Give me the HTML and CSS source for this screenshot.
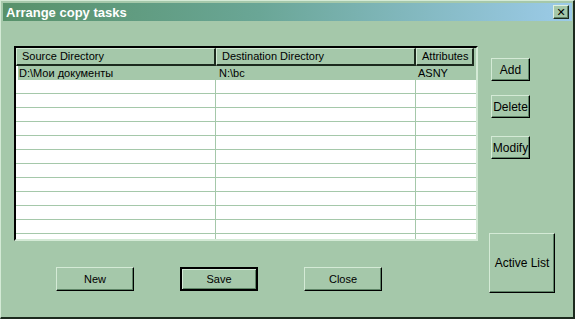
FILE: index.html
```html
<!DOCTYPE html>
<html>
<head>
  <title>Arrange copy tasks</title>
  <link rel="stylesheet" href="styles.css">
</head>
<body>

  <div class="window">
    <div class="titlebar">
      <span class="title">Arrange copy tasks</span>
      <button class="close-box">&#x2715;</button>
    </div>

    <div class="content">
      <div class="left-col">
        <div class="list">
          <div class="list-head">
            <div class="hcell col-src">Source Directory</div>
            <div class="hcell col-dst">Destination Directory</div>
            <div class="hcell col-attr">Attributes</div>
          </div>
          <div class="list-rows">
            <div class="row selected">
              <div class="cell col-src">D:\Мои документы</div>
              <div class="cell col-dst">N:\bc</div>
              <div class="cell col-attr">ASNY</div>
            </div>
            <div class="row"><div class="cell col-src"></div><div class="cell col-dst"></div><div class="cell col-attr"></div></div>
            <div class="row"><div class="cell col-src"></div><div class="cell col-dst"></div><div class="cell col-attr"></div></div>
            <div class="row"><div class="cell col-src"></div><div class="cell col-dst"></div><div class="cell col-attr"></div></div>
            <div class="row"><div class="cell col-src"></div><div class="cell col-dst"></div><div class="cell col-attr"></div></div>
            <div class="row"><div class="cell col-src"></div><div class="cell col-dst"></div><div class="cell col-attr"></div></div>
            <div class="row"><div class="cell col-src"></div><div class="cell col-dst"></div><div class="cell col-attr"></div></div>
            <div class="row"><div class="cell col-src"></div><div class="cell col-dst"></div><div class="cell col-attr"></div></div>
            <div class="row"><div class="cell col-src"></div><div class="cell col-dst"></div><div class="cell col-attr"></div></div>
            <div class="row"><div class="cell col-src"></div><div class="cell col-dst"></div><div class="cell col-attr"></div></div>
            <div class="row"><div class="cell col-src"></div><div class="cell col-dst"></div><div class="cell col-attr"></div></div>
            <div class="row"><div class="cell col-src"></div><div class="cell col-dst"></div><div class="cell col-attr"></div></div>
            <div class="row"><div class="cell col-src"></div><div class="cell col-dst"></div><div class="cell col-attr"></div></div>
            <div class="row"><div class="cell col-src"></div><div class="cell col-dst"></div><div class="cell col-attr"></div></div>
          </div>
        </div>

        <div class="bottom-buttons">
          <button class="btn wide">New</button>
          <button class="btn wide default">Save</button>
          <button class="btn wide">Close</button>
        </div>
      </div>

      <div class="right-col">
        <button class="btn small add">Add</button>
        <button class="btn small delete">Delete</button>
        <button class="btn small modify">Modify</button>
        <button class="btn active-list">Active List</button>
      </div>
    </div>
  </div>

</body>
</html>
```

FILE: styles.css
```css
body {
  margin: 0;
  padding: 0;
  background-color: #a5c8aa;
  font-family: "Liberation Sans", Arial, sans-serif;
  font-size: 11px;
  color: #000;
}

.window {
  width: 575px;
  height: 319px;
  box-sizing: border-box;
  background-color: #a5c8aa;
  border-left: 1px solid #d4ead6;
  border-top: 1px solid #d4ead6;
  border-right: 2px solid #1c2a1e;
  border-bottom: 2px solid #1c2a1e;
  padding: 2px 1px 0 2px;
}

.titlebar {
  height: 18px;
  display: flex;
  align-items: center;
  justify-content: space-between;
  padding: 0 3px 0 3px;
  background: linear-gradient(to right, #57916a 0%, #6aa696 45%, #9ccbe9 100%);
}

.title {
  color: #fff;
  font-weight: bold;
  font-size: 13px;
}

.close-box {
  width: 16px;
  height: 14px;
  padding: 0;
  font-size: 11px;
  font-weight: bold;
  line-height: 11px;
  background-color: #a5c8aa;
  border: 1px solid;
  border-color: #e0f0e0 #1c2a1e #1c2a1e #e0f0e0;
  box-shadow: inset -1px -1px 0 #5e8466;
  color: #000;
  font-family: "DejaVu Sans", sans-serif;
}

.content {
  display: flex;
  padding: 25px 0 0 11px;
}

.left-col {
  width: 464px;
}

.list {
  height: 195px;
  box-sizing: border-box;
  border-left: 2px solid #000;
  border-top: 2px solid #000;
  border-right: 2px solid #d4ead6;
  border-bottom: 2px solid #d4ead6;
  background-color: #fff;
  overflow: hidden;
}

.list-head {
  display: flex;
  height: 18px;
  background-color: #a5c8aa;
}

.hcell {
  box-sizing: border-box;
  height: 18px;
  line-height: 15px;
  padding-left: 5px;
  border-left: 1px solid #d4ead6;
  border-top: 1px solid #d4ead6;
  border-right: 2px solid #1c2a1e;
  border-bottom: 2px solid #1c2a1e;
  white-space: nowrap;
  overflow: hidden;
}

.col-src { width: 200px; }
.col-dst { width: 200px; }
.col-attr { width: 58px; }

.row {
  display: flex;
  height: 13px;
  border-bottom: 1px solid #a5c8aa;
}

.row .cell {
  box-sizing: border-box;
  height: 13px;
  border-right: 1px solid #a5c8aa;
  line-height: 13px;
  padding-left: 3px;
  white-space: nowrap;
}

.row .col-attr {
  border-right: none;
  padding-left: 2px;
}

.row.selected {
  background-color: #a5c8aa;
  height: 14px;
  border-bottom: none;
}

.row.selected .cell {
  height: 14px;
  line-height: 15px;
}

.row.selected .col-src {
  border-left: 2px solid #fff;
  padding-left: 1px;
}

.bottom-buttons {
  display: flex;
  gap: 46px;
  padding: 26px 0 0 42px;
}

.btn {
  font-family: "Liberation Sans", Arial, sans-serif;
  font-size: 11px;
  color: #000;
  background-color: #a5c8aa;
  border: 1px solid;
  border-color: #d4ead6 #000 #000 #d4ead6;
  box-shadow: inset -1px -1px 0 #5e8466;
  padding: 0;
}

.btn.wide {
  width: 78px;
  height: 24px;
}

.btn.wide.default {
  border: 2px solid #000;
  box-shadow: inset 1px 1px 0 #d4ead6, inset -1px -1px 0 #5e8466;
}

.right-col {
  display: flex;
  flex-direction: column;
  align-items: flex-start;
  padding-left: 11px;
}

.btn.small {
  width: 39px;
  height: 23px;
  margin-left: 2px;
  font-size: 12px;
}

.add { margin-top: 12px; }
.delete { margin-top: 14px; }
.modify { margin-top: 18px; }

.btn.active-list {
  width: 66px;
  height: 60px;
  margin-top: 74px;
  font-size: 12px;
}
```
